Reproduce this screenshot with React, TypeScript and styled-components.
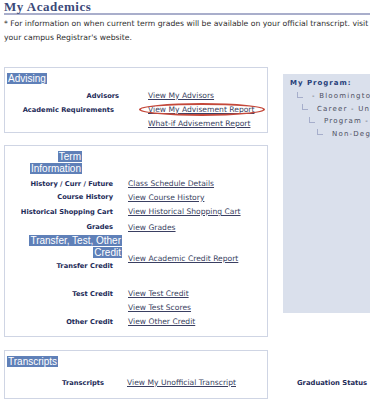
import React from 'react';
import styled, { createGlobalStyle } from 'styled-components';

const GlobalStyle = createGlobalStyle`
  html, body {
    margin: 0;
    padding: 0;
    background: #ffffff;
    overflow: hidden;
  }
  body {
    font-family: "DejaVu Sans", Verdana, sans-serif;
  }
`;

const Page = styled.div`
  width: 370px;
  height: 400px;
  padding-left: 4px;
  box-sizing: border-box;
  overflow: hidden;
`;

const TitleBar = styled.h1`
  margin: 0;
  padding-top: 1px;
  font-family: "Liberation Serif", "Times New Roman", serif;
  font-size: 13px;
  line-height: 12px;
  letter-spacing: 0.5px;
  font-weight: 700;
  color: #3b4a7a;
  border-bottom: 2px solid #a9aecb;
`;

const Note = styled.p`
  margin: 2px 0 0;
  font-size: 7.7px;
  line-height: 14px;
  color: #2e2e2e;
`;

const Main = styled.div`
  display: flex;
  gap: 15px;
  margin-top: 22px;
`;

const LeftColumn = styled.div`
  width: 264px;
  flex: none;
  display: flex;
  flex-direction: column;
`;

const Box = styled.section<{ $gapTop?: number; $pb?: number }>`
  border: 1px solid #cfd5e4;
  margin-top: ${p => p.$gapTop ?? 0}px;
  padding: 5px 0 ${p => p.$pb ?? 0}px;
  box-sizing: border-box;
`;

const HeaderBlock = styled.div<{ $width?: number; $right?: boolean }>`
  width: ${p => (p.$width ? `${p.$width}px` : 'auto')};
  padding-left: ${p => (p.$right ? 0 : 2)}px;
  text-align: ${p => (p.$right ? 'right' : 'left')};
  font-family: "Liberation Sans", Arial, sans-serif;
  font-size: 10px;
  line-height: 12px;
  white-space: nowrap;
`;

const Highlight = styled.span`
  background: #5f80b8;
  color: #ffffff;
  padding: 0 1px;
`;

const Rows = styled.div<{ $label: number; $gap: number; $mt?: number }>`
  display: grid;
  grid-template-columns: ${p => p.$label}px 1fr;
  column-gap: ${p => p.$gap}px;
  margin-top: ${p => p.$mt ?? 0}px;
  align-items: center;
  font-size: 7.6px;
`;

const Label = styled.div<{ $inset?: number; $h?: number }>`
  text-align: right;
  padding-right: ${p => p.$inset ?? 0}px;
  font-size: 6.7px;
  font-weight: 700;
  color: #1d2b58;
  line-height: ${p => p.$h ?? 14}px;
  min-height: ${p => p.$h ?? 14}px;
  white-space: nowrap;
`;

const Cell = styled.div<{ $h?: number; $pt?: number }>`
  font-size: 7.6px;
  line-height: ${p => p.$h ?? 14}px;
  padding-top: ${p => p.$pt ?? 0}px;
  align-self: stretch;
  white-space: nowrap;
`;

const LinkText = styled.a<{ $circled?: boolean }>`
  position: relative;
  font-size: 7.6px;
  color: #3a3f62;
  text-decoration: underline;
  cursor: pointer;

  ${p =>
    p.$circled &&
    `
    &::after {
      content: '';
      position: absolute;
      left: -9px;
      right: -11px;
      top: -2px;
      bottom: -2px;
      border: 2px solid #c4483a;
      border-radius: 50%;
    }
  `}
`;

const Stack = styled.div`
  display: flex;
  flex-direction: column;
  align-self: stretch;
`;

const Spacer = styled.div<{ $h: number }>`
  grid-column: 1 / -1;
  height: ${p => p.$h}px;
`;

const RightColumn = styled.div`
  flex: 1;
  min-width: 0;
  display: flex;
  flex-direction: column;
`;

const ProgramPanel = styled.div`
  margin-top: 7px;
  height: 239px;
  background: #dae0ec;
  padding: 2px 0 0 7px;
  box-sizing: border-box;
  overflow: hidden;
`;

const PanelTitle = styled.div`
  font-size: 7px;
  font-weight: 700;
  letter-spacing: 1px;
  line-height: 14px;
  color: #27407a;
  white-space: nowrap;
`;

const TreeItem = styled.div<{ $indent: number }>`
  display: flex;
  align-items: center;
  padding-left: ${p => p.$indent}px;
  height: 12.5px;
  font-size: 7px;
  letter-spacing: 1.2px;
  color: #4d4f62;
  white-space: nowrap;
`;

const Connector = styled.span`
  width: 5px;
  height: 5px;
  margin-top: -3px;
  margin-right: 9px;
  flex: none;
  border-left: 1px solid #a6aecb;
  border-bottom: 1px solid #a6aecb;
`;

const StatusLabel = styled.div`
  margin-top: 64px;
  padding-left: 14px;
  font-size: 6.8px;
  font-weight: 700;
  line-height: 12px;
  color: #1d2b58;
  white-space: nowrap;
`;

const tree = [
  { indent: 7, text: '- Bloomington' },
  { indent: 12, text: 'Career - Undergraduate' },
  { indent: 19, text: 'Program - Non-Degree' },
  { indent: 27, text: 'Non-Degree Seeking' },
];

export default function App() {
  return (
    <>
      <GlobalStyle />
      <Page>
        <TitleBar>My Academics</TitleBar>
        <Note>
          * For information on when current term grades will be available on your official transcript. visit
          your campus Registrar's website.
        </Note>

        <Main>
          <LeftColumn>
            <Box $pb={2}>
              <HeaderBlock>
                <Highlight>Advising</Highlight>
              </HeaderBlock>
              <Rows $label={114} $gap={29} $mt={4}>
                <Label>Advisors</Label>
                <Cell><LinkText>View My Advisors</LinkText></Cell>
                <Label $inset={5}>Academic Requirements</Label>
                <Cell><LinkText $circled>View My Advisement Report</LinkText></Cell>
                <Label $h={13} />
                <Cell $h={13}><LinkText>What-if Advisement Report</LinkText></Cell>
              </Rows>
            </Box>

            <Box $gapTop={12} $pb={7}>
              <HeaderBlock $right $width={77}>
                <Highlight>Term</Highlight>
                <br />
                <Highlight>Information</Highlight>
              </HeaderBlock>
              <Rows $label={108} $gap={15} $mt={2}>
                <Label>History / Curr / Future</Label>
                <Cell><LinkText>Class Schedule Details</LinkText></Cell>
                <Label $h={13}>Course History</Label>
                <Cell $h={13}><LinkText>View Course History</LinkText></Cell>
                <Label $h={16}>Historical Shopping Cart</Label>
                <Cell $h={16}><LinkText>View Historical Shopping Cart</LinkText></Cell>
                <Label $h={15}>Grades</Label>
                <Cell $h={15}><LinkText>View Grades</LinkText></Cell>
                <Stack>
                  <HeaderBlock $right $width={117}>
                    <Highlight>Transfer, Test, Other</Highlight>
                    <br />
                    <Highlight>Credit</Highlight>
                  </HeaderBlock>
                  <Label $h={14}>Transfer Credit</Label>
                </Stack>
                <Cell $pt={17}><LinkText>View Academic Credit Report</LinkText></Cell>
                <Spacer $h={14} />
                <Label>Test Credit</Label>
                <Cell><LinkText>View Test Credit</LinkText></Cell>
                <Label />
                <Cell><LinkText>View Test Scores</LinkText></Cell>
                <Label>Other Credit</Label>
                <Cell><LinkText>View Other Credit</LinkText></Cell>
              </Rows>
            </Box>

            <Box $gapTop={13} $pb={8}>
              <HeaderBlock>
                <Highlight>Transcripts</Highlight>
              </HeaderBlock>
              <Rows $label={99} $gap={23} $mt={8}>
                <Label>Transcripts</Label>
                <Cell><LinkText>View My Unofficial Transcript</LinkText></Cell>
              </Rows>
            </Box>
          </LeftColumn>

          <RightColumn>
            <ProgramPanel>
              <PanelTitle>My Program:</PanelTitle>
              {tree.map(item => (
                <TreeItem key={item.text} $indent={item.indent}>
                  <Connector />
                  {item.text}
                </TreeItem>
              ))}
            </ProgramPanel>
            <StatusLabel>Graduation Status</StatusLabel>
          </RightColumn>
        </Main>
      </Page>
    </>
  );
}
